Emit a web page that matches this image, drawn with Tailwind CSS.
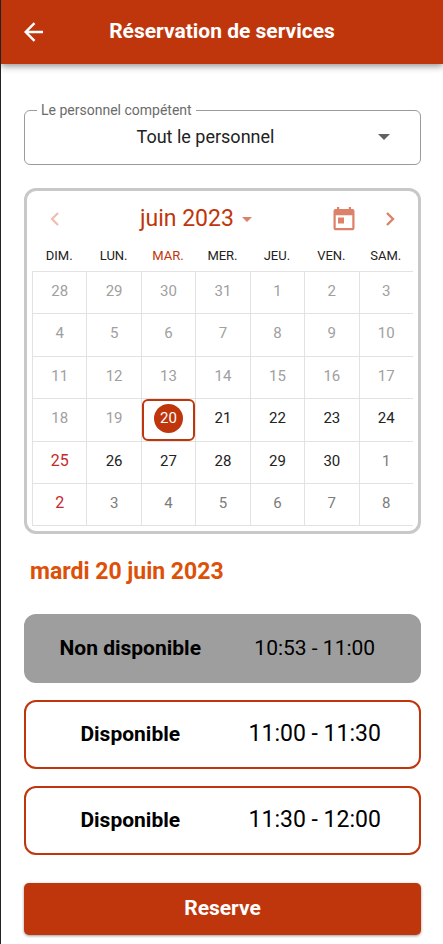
<!DOCTYPE html>
<html lang="fr">
<head>
<meta charset="utf-8">
<meta name="viewport" content="width=device-width, initial-scale=1">
<title>Réservation de services</title>
<script src="https://cdn.jsdelivr.net/npm/@tailwindcss/browser@4"></script>
</head>
<body class="min-h-screen border-l border-[#222222] bg-white font-[Roboto,sans-serif] text-[#222222]">
<header class="relative flex h-16 items-center justify-center bg-[#bf360c] shadow-[0_2px_7px_rgba(0,0,0,0.45)]">
  <button type="button" aria-label="Retour" class="absolute left-5 flex size-6 items-center justify-center text-white">
    <svg class="size-6" viewBox="0 0 24 24" fill="none" stroke="currentColor" stroke-width="2.4"><path d="M22 12H5M13.500 3.200L4.700 12L13.500 20.800"/></svg>
  </button>
  <h1 class="text-[21px] font-bold text-white">Réservation de services</h1>
</header>
<main class="px-[23px] pt-[38px] pr-[22px]">
  <fieldset class="h-[63px] rounded-md border border-[#9b9b9b]">
    <legend class="ml-3 px-1 text-sm leading-4 text-[#6b6b6b]"><label for="staff">Le personnel compétent</label></legend>
    <div class="relative">
      <select id="staff" class="h-[38px] w-full appearance-none bg-transparent pr-[34px] text-lg text-[#222222] [text-align-last:center]">
        <option>Tout le personnel</option>
      </select>
      <svg class="pointer-events-none absolute top-4 right-[30px] h-[6px] w-3" viewBox="0 0 12 6" fill="#616161"><path d="M0 0H12L6 6Z"/></svg>
    </div>
  </fieldset>

  <section class="mt-[23px] rounded-xl border-[3px] border-[#c8c8c8] px-[5px] pb-[5px]" aria-label="Calendrier">
    <div class="relative flex h-[54px] items-center pt-0.5 text-[#db8269]">
      <button type="button" aria-label="Mois précédent" class="ml-[18px] text-[#ecbdb0]">
        <svg class="h-3.5 w-2.5" viewBox="0 0 10 14" fill="none" stroke="currentColor" stroke-width="2.200"><path d="M8 1L2 7L8 13"/></svg>
      </button>
      <button type="button" class="ml-20 flex items-center gap-2 text-[23px] text-[#bf360c]">juin 2023
        <svg class="h-[5px] w-2.5" viewBox="0 0 10 5" fill="#db8269"><path d="M0 0H10L5 5Z"/></svg>
      </button>
      <button type="button" aria-label="Aujourd’hui" class="ml-auto">
        <svg class="h-6 w-[22px]" viewBox="0 0 22 24" fill="currentColor"><path fill-rule="evenodd" d="M4 0H6.200V2H15.800V0H18V2H19.500Q21.500 2 21.500 4V21Q21.500 23.300 19.500 23.300H2.500Q.5 23.300 .5 21V4Q.5 2 2.500 2H4ZM2.700 8.300V21.100H19.300V8.300Z"/><path d="M5 10.500H11V16.500H5Z"/></svg>
      </button>
      <button type="button" aria-label="Mois suivant" class="mr-[18px] ml-[30px]">
        <svg class="h-3.5 w-2.5" viewBox="0 0 10 14" fill="none" stroke="currentColor" stroke-width="2.400"><path d="M2 1L8 7L2 13"/></svg>
      </button>
    </div>
    <table class="w-full table-fixed border-separate border-spacing-0 text-center">
      <thead>
        <tr class="h-[26px] text-[13px] leading-4 [&>th]:p-0 [&>th]:pb-1 [&>th]:font-normal">
          <th>DIM.</th><th>LUN.</th><th class="text-[#bf360c]">MAR.</th><th>MER.</th><th>JEU.</th><th>VEN.</th><th>SAM.</th>
        </tr>
      </thead>
      <tbody id="days" class="text-[15px] leading-5"></tbody>
    </table>
  </section>

  <h2 class="mt-5 ml-[6px] text-[23px] leading-9 font-bold text-[#dd5007]">mardi 20 juin 2023</h2>

  <div class="mt-6 flex flex-col gap-[17px] text-center text-black">
    <button type="button" disabled class="grid h-[69px] grid-cols-2 items-center rounded-xl border-2 border-[#9e9e9e] bg-[#9e9e9e] px-3"><span class="text-[21px] font-bold">Non disponible</span><span class="text-[21px]">10:53 - 11:00</span></button>
    <button type="button" class="grid h-[69px] grid-cols-2 items-center rounded-xl border-2 border-[#bf360c] px-3"><span class="text-[21px] font-bold">Disponible</span><span class="text-[23px]">11:00 - 11:30</span></button>
    <button type="button" class="grid h-[69px] grid-cols-2 items-center rounded-xl border-2 border-[#bf360c] px-3"><span class="text-[21px] font-bold">Disponible</span><span class="text-[23px]">11:30 - 12:00</span></button>
  </div>

  <button type="button" class="mt-7 mb-2 h-[52px] w-full rounded-[5px] bg-[#bf360c] text-[21px] font-bold text-white shadow-[0_1px_3px_rgba(0,0,0,0.4)]">Reserve</button>
</main>
<script>
  const weeks = [
    [28, 29, 30, 31, 1, 2, 3],
    [4, 5, 6, 7, 8, 9, 10],
    [11, 12, 13, 14, 15, 16, 17],
    [18, 19, 20, 21, 22, 23, 24],
    [25, 26, 27, 28, 29, 30, 1],
    [2, 3, 4, 5, 6, 7, 8]
  ];
  const todayIndex = 3 * 7 + 2;
  const lastIndex = 4 * 7 + 5;
  document.getElementById('days').innerHTML = weeks.map((week, w) => '<tr>' + week.map((day, d) => {
    const i = w * 7 + d;
    const line = w === 5 ? 'border-y' : 'border-t';
    const height = w % 2 ? 'h-[43px]' : 'h-[42px]';
    if (i === todayIndex) {
      return `<td class="${line} ${height} border-l border-[#e2e2e2] p-0"><button type="button" aria-pressed="true" class="block h-[42px] w-full rounded-md border-2 border-[#bf360c] px-0 pb-1"><span class="mx-auto flex size-[29px] items-center justify-center rounded-full bg-[#bf360c] text-white">${day}</span></button></td>`;
    }
    let color = 'text-[#a0a0a0]';
    if (i > todayIndex) color = i > lastIndex ? 'text-[#7c7c7c]' : 'text-[#222222]';
    if (d === 0 && w > 3) color = 'text-[#c62828] text-base';
    const off = i < todayIndex ? 'disabled' : '';
    return `<td class="${line} ${height} border-l border-[#e2e2e2] p-0"><button type="button" ${off} class="w-full pb-1 ${color}">${day}</button></td>`;
  }).join('') + '</tr>').join('');
</script>
</body>
</html>
